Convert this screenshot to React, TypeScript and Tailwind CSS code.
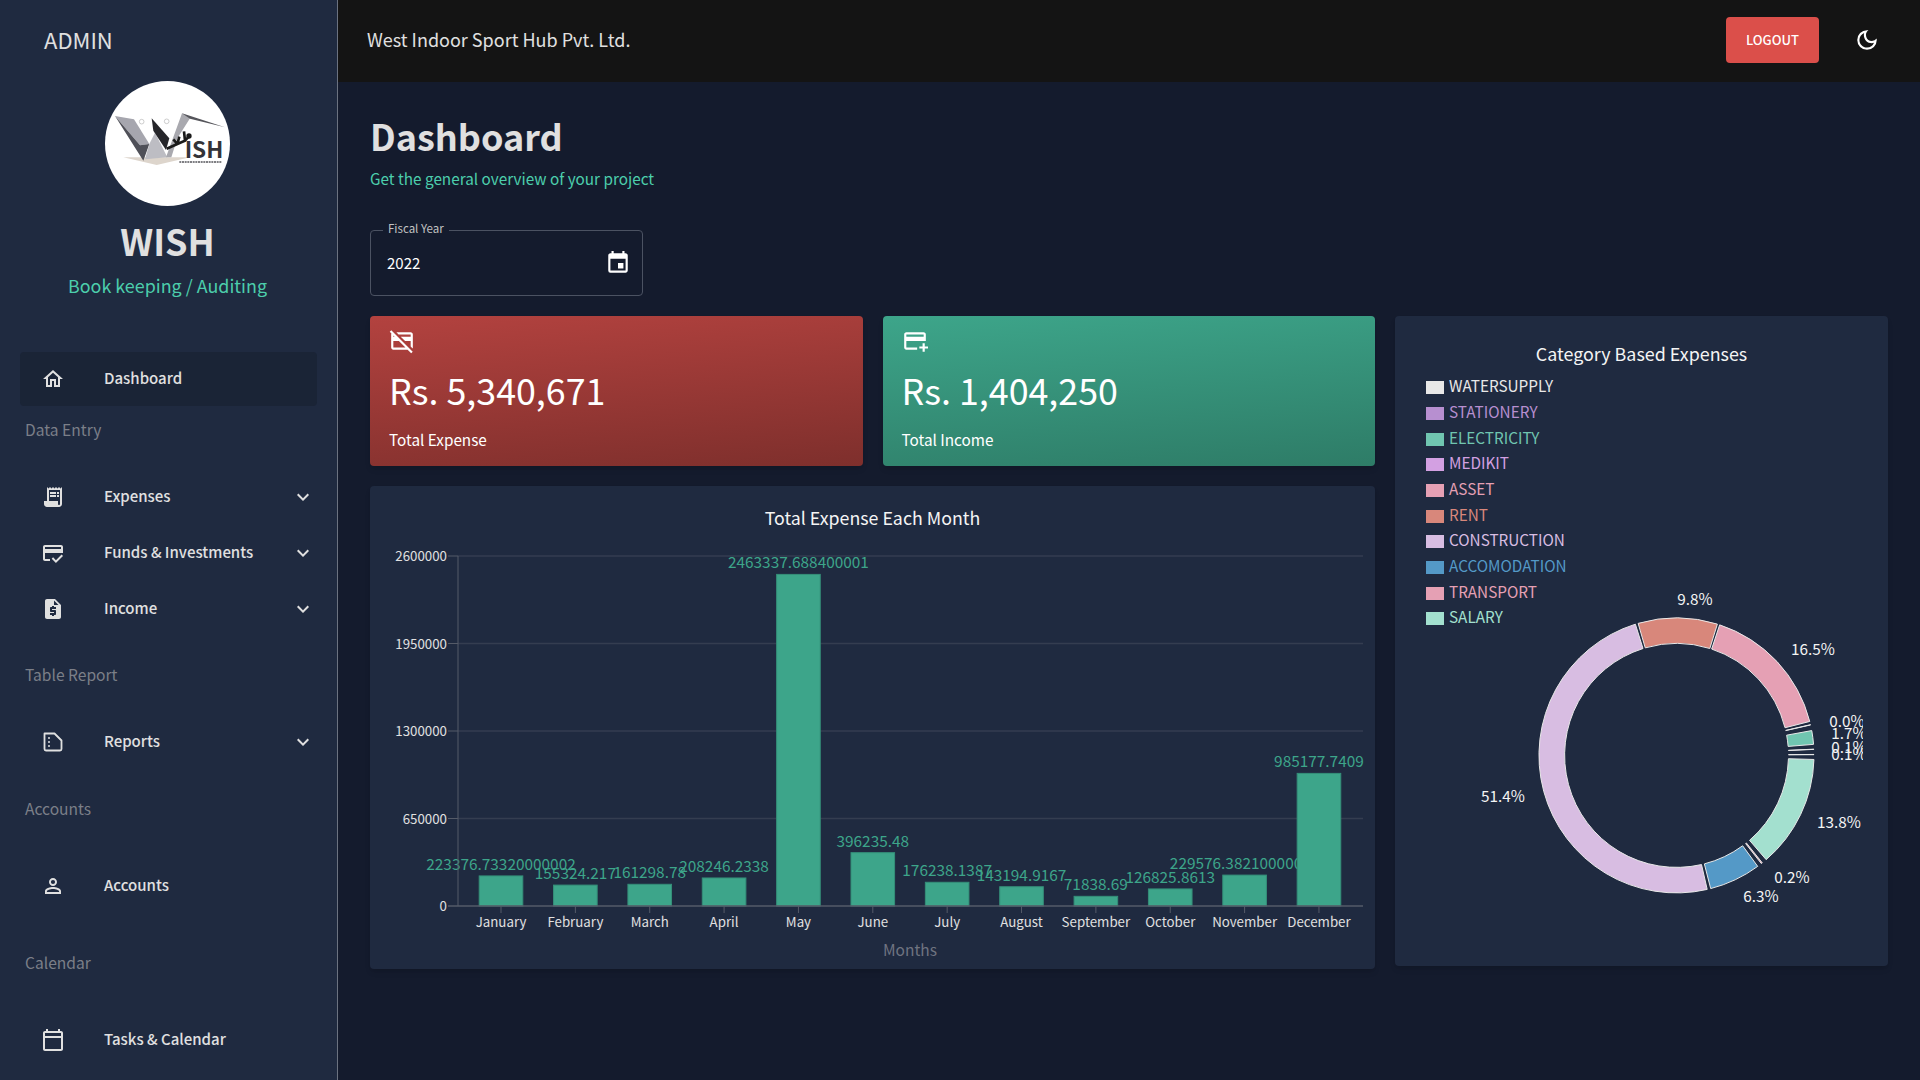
import type { ReactNode } from 'react';
import {
  MdEvent,
  MdExpandMore,
  MdOutlineAddCard,
  MdOutlineCalendarToday,
  MdOutlineCreditCardOff,
  MdOutlineCreditScore,
  MdOutlineDarkMode,
  MdOutlineHome,
  MdOutlinePersonOutline,
  MdReceiptLong,
  MdRequestQuote,
} from 'react-icons/md';

const months = [
  { name: 'January', value: 223376.73320000002, label: '223376.73320000002' },
  { name: 'February', value: 155324.217, label: '155324.217' },
  { name: 'March', value: 161298.78, label: '161298.78' },
  { name: 'April', value: 208246.2338, label: '208246.2338' },
  { name: 'May', value: 2463337.688400001, label: '2463337.688400001' },
  { name: 'June', value: 396235.48, label: '396235.48' },
  { name: 'July', value: 176238.1387, label: '176238.1387' },
  { name: 'August', value: 143194.9167, label: '143194.9167' },
  { name: 'September', value: 71838.69, label: '71838.69' },
  { name: 'October', value: 126825.8613, label: '126825.8613' },
  { name: 'November', value: 229576.3821, label: '229576.38210000002' },
  { name: 'December', value: 985177.7409, label: '985177.7409' },
];

const legend = [
  { name: 'WATERSUPPLY', color: '#e8e8e8', text: '#e8e8e8' },
  { name: 'STATIONERY', color: '#b78fd0', text: '#b78fd0' },
  { name: 'ELECTRICITY', color: '#70c5b0', text: '#70c5b0' },
  { name: 'MEDIKIT', color: '#d3a0e2', text: '#d3a0e2' },
  { name: 'ASSET', color: '#e5a0b4', text: '#e5a0b4' },
  { name: 'RENT', color: '#d8877b', text: '#d8877b' },
  { name: 'CONSTRUCTION', color: '#d8bde2', text: '#d8bde2' },
  { name: 'ACCOMODATION', color: '#5499c7', text: '#5499c7' },
  { name: 'TRANSPORT', color: '#e5a0b4', text: '#e5a0b4' },
  { name: 'SALARY', color: '#a3e0cf', text: '#a3e0cf' },
];

// angles in degrees, clockwise from 12 o'clock
const slices = [
  { from: 167.1, to: 342.6, color: '#d8bde2' },
  { from: 343.8, to: 377.3, color: '#d8877b' },
  { from: 18.3, to: 75.7, color: '#e5a0b4' },
  { from: 77.1, to: 77.2, color: '#e8e8e8' },
  { from: 79.6, to: 85.4, color: '#70c5b0' },
  { from: 87.4, to: 87.5, color: '#b78fd0' },
  { from: 89.6, to: 89.7, color: '#d3a0e2' },
  { from: 91.7, to: 139.3, color: '#a3e0cf' },
  { from: 141.4, to: 141.9, color: '#e5a0b4' },
  { from: 143.8, to: 165.6, color: '#5499c7' },
];

const pieLabels = [
  { text: '51.4%', x: 108, y: 217 },
  { text: '9.8%', x: 300, y: 20 },
  { text: '16.5%', x: 418, y: 70 },
  { text: '0.0%', x: 452, y: 142 },
  { text: '1.7%', x: 454, y: 154 },
  { text: '0.1%', x: 454, y: 168 },
  { text: '0.1%', x: 454, y: 175 },
  { text: '13.8%', x: 444, y: 243 },
  { text: '0.2%', x: 397, y: 298 },
  { text: '6.3%', x: 366, y: 317 },
];

function slicePath(from: number, to: number, cx: number, cy: number, inner: number, outer: number) {
  const pt = (r: number, deg: number) => {
    const a = (deg * Math.PI) / 180;
    return `${(cx + r * Math.sin(a)).toFixed(2)} ${(cy - r * Math.cos(a)).toFixed(2)}`;
  };
  const large = to - from > 180 ? 1 : 0;
  return `M${pt(outer, from)} A${outer} ${outer} 0 ${large} 1 ${pt(outer, to)} L${pt(inner, to)} A${inner} ${inner} 0 ${large} 0 ${pt(inner, from)} Z`;
}

function ReportsIcon() {
  return (
    <svg width="24" height="24" viewBox="0 0 24 24" fill="none">
      <path d="M3.5 3.5h10l7 7v8.5a1.5 1.5 0 0 1-1.5 1.5H5a1.5 1.5 0 0 1-1.5-1.5z" stroke="currentColor" strokeWidth="1.8" strokeLinejoin="round" />
      <circle cx="8" cy="8" r="1" fill="currentColor" />
      <circle cx="8" cy="12" r="1" fill="currentColor" />
      <circle cx="8" cy="16" r="1" fill="currentColor" />
    </svg>
  );
}

function Logo() {
  return (
    <svg viewBox="45 33 375 375" className="w-[125px] h-[125px]">
      <circle cx="232.5" cy="220.5" r="187.5" fill="#ffffff" />
      <polygon points="100,262 300,262 200,285" fill="#ddd5cc" />
      <polygon points="75,138 132,148 178,222 150,226" fill="#a6a6ae" />
      <polygon points="75,138 150,226 178,222 160,272" fill="#4f5058" />
      <polygon points="178,222 195,188 232,262 165,268" fill="#bdbdc3" />
      <polygon points="185,145 238,205 228,240 190,182" fill="#26262a" />
      <polygon points="228,262 276,130 302,142 262,205 244,262" fill="#a9a9af" />
      <polygon points="276,130 405,172 300,146" fill="#55555b" />
      <circle cx="155" cy="155" r="7" fill="none" stroke="#b5b5b5" strokeWidth="2" />
      <circle cx="230" cy="154" r="7" fill="none" stroke="#b5b5b5" strokeWidth="2" />
      <path d="M230 236 L262 222 L268 200 M262 222 L285 212 L282 184 M285 212 L300 196 M262 222 L250 208" stroke="#1a1a1a" strokeWidth="8" fill="none" />
      <circle cx="297" cy="198" r="8" fill="#1a1a1a" />
      <text x="284" y="265" fontSize="66" fontWeight="700" fill="#333338" textLength="116" lengthAdjust="spacingAndGlyphs">
        ISH
      </text>
      <line x1="268" y1="276" x2="396" y2="276" stroke="#55555b" strokeWidth="5" strokeDasharray="6 2" />
    </svg>
  );
}

function Section({ title, className }: { title: string; className: string }) {
  return <div className={`h-6 pl-[25px] pb-[2px] flex items-center text-[15.6px] text-[#7b7f88] ${className}`}>{title}</div>;
}

function NavItem({ icon, label, caret, className = '' }: { icon: ReactNode; label: string; caret?: boolean; className?: string }) {
  return (
    <div className={`h-14 flex items-center text-[15px] font-medium text-[#e0e0e0] ${className}`}>
      <span className="w-[104px] pl-[41px] shrink-0">{icon}</span>
      <span className="pb-[2px]">{label}</span>
      {caret && (
        <span className="ml-auto mr-[22px]">
          <MdExpandMore size={24} className="text-[#e0e0e0]" />
        </span>
      )}
    </div>
  );
}

function Sidebar() {
  return (
    <aside className="w-[338px] shrink-0 h-full bg-[#1f2a40] border-r border-[#6b7280] flex flex-col overflow-hidden">
      <div className="h-20 pl-11 pb-[2px] flex items-center text-[22px] text-[#e0e0e0]">ADMIN</div>
      <div className="mt-px pr-[2px] flex justify-center">
        <Logo />
      </div>
      <div className="mt-[10px] pr-[2px] h-12 flex items-center justify-center text-[36px] leading-none font-bold text-[#e0e0e0]">WISH</div>
      <div className="mt-[3px] pr-[2px] h-9 flex items-center justify-center text-[17.9px] text-[#4cceac]">Book keeping / Auditing</div>
      <nav className="mt-[49px] flex flex-col">
        <div className="mx-5 h-[54px] bg-[#1a2436] rounded-sm flex items-center text-[15px] font-medium text-[#e0e0e0]">
          <span className="w-[84px] pl-[21px] shrink-0">
            <MdOutlineHome size={24} className="text-[#e0e0e0]" />
          </span>
          <span className="pb-[2px]">Dashboard</span>
        </div>
        <Section title="Data Entry" className="mt-[13px]" />
        <NavItem className="mt-[26px]" icon={<MdReceiptLong size={24} />} label="Expenses" caret />
        <NavItem icon={<MdOutlineCreditScore size={24} />} label="Funds & Investments" caret />
        <NavItem icon={<MdRequestQuote size={24} />} label="Income" caret />
        <Section title="Table Report" className="mt-[27px]" />
        <NavItem className="mt-[26px]" icon={<ReportsIcon />} label="Reports" caret />
        <Section title="Accounts" className="mt-[28px]" />
        <NavItem className="mt-[36px]" icon={<MdOutlinePersonOutline size={24} />} label="Accounts" />
        <Section title="Calendar" className="mt-[38px]" />
        <NavItem className="mt-[36px]" icon={<MdOutlineCalendarToday size={24} />} label="Tasks & Calendar" />
      </nav>
    </aside>
  );
}

function StatCard({ icon, amount, label, gradient }: { icon: ReactNode; amount: string; label: string; gradient: string }) {
  return (
    <div className={`h-[150px] rounded shadow-md pl-[19px] flex flex-col text-white ${gradient}`}>
      <div className="h-6 mt-[12px]">{icon}</div>
      <div className="mt-[14px] h-[48px] flex items-center text-[35.8px] leading-none">{amount}</div>
      <div className="mt-[13px] h-6 flex items-center text-[15.3px]">{label}</div>
    </div>
  );
}

function ExpenseChart() {
  const left = 88;
  const right = 993;
  const base = 356;
  const rows = [
    { y: 6, label: '2600000' },
    { y: 93.5, label: '1950000' },
    { y: 181, label: '1300000' },
    { y: 268.5, label: '650000' },
  ];
  return (
    <svg viewBox="0 0 1005 419" className="w-full h-[419px] block">
      {rows.map((r) => (
        <g key={r.label}>
          <line x1={left} x2={right} y1={r.y} y2={r.y} stroke="#343d50" strokeWidth="1.5" />
          <line x1={78} x2={left} y1={r.y} y2={r.y} stroke="#555b68" />
          <text x={77} y={r.y + 5} textAnchor="end" fill="#e0e0e0" fontSize="13.3">{r.label}</text>
        </g>
      ))}
      <text x={77} y={base + 5} textAnchor="end" fill="#e0e0e0" fontSize="13.3">0</text>
      {months.map((m, i) => {
        const cx = 131 + 74.36 * i;
        const h = (m.value / 2600000) * 350;
        return (
          <g key={m.name}>
            <rect x={cx - 21.8} y={base - h} width="43.6" height={h} fill="#3da58a" stroke="#358f79" />
            <text x={cx} y={base - h - 6} textAnchor="middle" fill="#3da58a" fontSize="15.4">{m.label}</text>
            <line x1={cx} x2={cx} y1={base} y2={base + 7} stroke="#555b68" />
            <text x={cx} y={377} textAnchor="middle" fill="#e0e0e0" fontSize="13.3">{m.name}</text>
          </g>
        );
      })}
      <line x1={left} x2={left} y1={6} y2={base} stroke="#555b68" />
      <line x1={78} x2={right} y1={base} y2={base} stroke="#555b68" strokeWidth="1.5" />
      <text x={540} y={406} textAnchor="middle" fill="#6f7480" fontSize="15.5">Months</text>
    </svg>
  );
}

function PieCard() {
  return (
    <div className="w-[493px] h-[650px] bg-[#1f2a40] rounded shadow-md">
      <div className="h-[57px] pt-[17px] flex items-center justify-center text-[17.9px] text-[#f4f4f4]">Category Based Expenses</div>
      <div className="pl-[31px] flex flex-col relative z-10">
        {legend.map((l) => (
          <div key={l.name} className="h-[25.67px] flex items-center gap-[5px] text-[15.3px]" style={{ color: l.text }}>
            <span className="w-[18px] h-[13px] shrink-0 mt-[4px]" style={{ backgroundColor: l.color }} />
            <span>{l.name}</span>
          </div>
        ))}
      </div>
      <svg viewBox="0 0 468 370" className="w-[468px] h-[370px] -mt-[45px] block">
        {slices.map((s) => (
          <path key={s.from} d={slicePath(s.from, s.to, 281.5, 170.4, 112, 137.5)} fill={s.color} stroke="#e8e8e8" strokeWidth="1" />
        ))}
        {pieLabels.map((l, i) => (
          <text key={i} x={l.x} y={l.y} textAnchor="middle" fill="#f4f4f4" fontSize="15.3">{l.text}</text>
        ))}
      </svg>
    </div>
  );
}

export default function App() {
  return (
    <div className="flex h-screen w-full overflow-hidden bg-[#141b2d] font-['Noto_Sans_CJK_SC',sans-serif]">
      <Sidebar />
      <div className="flex-1 min-w-0 flex flex-col">
        <header className="h-[82px] pb-[2px] bg-[#141414] flex items-center pl-[29px] text-[18px] text-[#e0e0e0]">
          <span className="pb-[2px]">West Indoor Sport Hub Pvt. Ltd.</span>
          <button className="ml-auto w-[93px] h-[46px] rounded bg-[#db4f4a] text-white text-[13px] font-medium">LOGOUT</button>
          <span className="ml-[35px] mr-[40px]">
            <MdOutlineDarkMode size={26} className="text-white" />
          </span>
        </header>
        <main className="flex-1 pl-[32px] pr-[32px]">
          <h1 className="mt-[28px] h-[50px] flex items-center text-[36px] font-bold text-[#e0e0e0] leading-none">Dashboard</h1>
          <p className="mt-[6px] h-6 flex items-center text-[15.3px] text-[#4cceac]">Get the general overview of your project</p>
          <div className="relative mt-[40px] w-[273px] h-[66px] border border-[#4b5262] rounded flex items-center justify-between pl-[16px] pr-[11px] text-[15px] text-white">
            <span className="absolute -top-[11px] left-[12px] px-[5px] bg-[#141b2d] text-[11.5px] text-[#c2c2c2]">Fiscal Year</span>
            <span>2022</span>
            <MdEvent size={26} />
          </div>
          <div className="mt-[20px] flex gap-5 items-start">
            <div className="w-[1005px] shrink-0 flex flex-col gap-5">
              <div className="grid grid-cols-2 gap-5">
                <StatCard
                  icon={<MdOutlineCreditCardOff size={26} />}
                  amount="Rs. 5,340,671"
                  label="Total Expense"
                  gradient="bg-[linear-gradient(175deg,#b3423f,#7e2f2c)]"
                />
                <StatCard
                  icon={<MdOutlineAddCard size={26} />}
                  amount="Rs. 1,404,250"
                  label="Total Income"
                  gradient="bg-[linear-gradient(175deg,#3da58a,#2e7c67)]"
                />
              </div>
              <div className="h-[483px] bg-[#1f2a40] rounded shadow-md">
                <div className="h-[64px] pb-[2px] flex items-center justify-center text-[17.8px] text-[#f4f4f4]">Total Expense Each Month</div>
                <ExpenseChart />
              </div>
            </div>
            <PieCard />
          </div>
        </main>
      </div>
    </div>
  );
}
